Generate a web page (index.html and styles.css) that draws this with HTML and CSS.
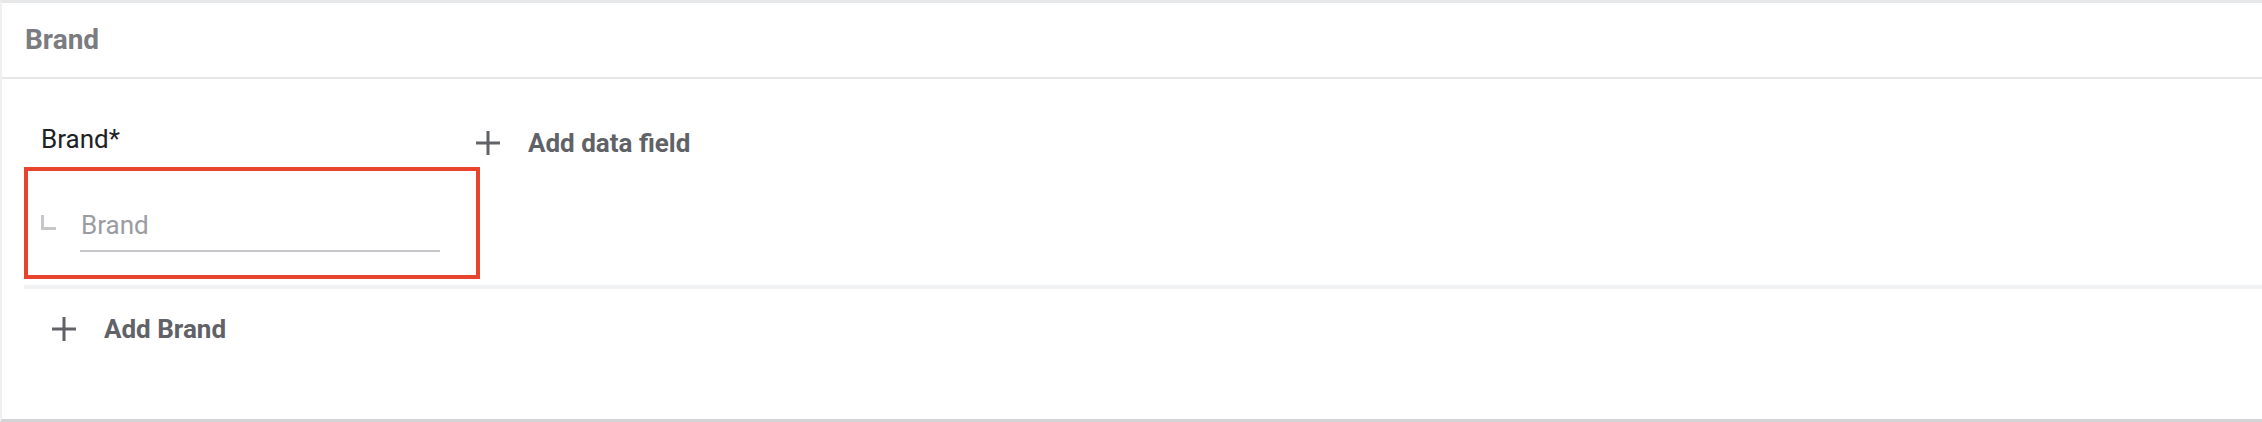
FILE: index.html
```html
<!DOCTYPE html>
<html lang="en">
<head>
    <meta charset="UTF-8">
    <meta name="viewport" content="width=device-width, initial-scale=1.0">
    <title>Brand</title>
    <link rel="stylesheet" href="styles.css">
</head>
<body>
    <div class="card">
        <div class="card-header">Brand</div>
        <div class="card-body">
            <div class="field-row">
                <div class="field-col">
                    <label class="field-label" for="brand">Brand*</label>
                    <div class="field-box">
                        <span class="corner"></span>
                        <input class="field-input" id="brand" type="text" placeholder="Brand">
                    </div>
                </div>
                <button class="add-btn add-field">
                    <svg width="24" height="24" viewBox="0 0 24 24"><path d="M12 0v24M0 12h24" stroke="currentColor" stroke-width="3" fill="none"/></svg>
                    Add data field
                </button>
            </div>
            <div class="divider"></div>
            <button class="add-btn add-brand">
                <svg width="24" height="24" viewBox="0 0 24 24"><path d="M12 0v24M0 12h24" stroke="currentColor" stroke-width="3" fill="none"/></svg>
                Add Brand
            </button>
        </div>
    </div>
</body>
</html>
```

FILE: styles.css
```css
*{
    margin: 0;
    padding: 0;
    box-sizing: border-box;
}
body{
    font-family: Roboto, "Liberation Sans", sans-serif;
    background-color: #fff;
}
.card {
    height: 422px;
    border-top: 3px solid #e6e7e9;
    border-left: 2px solid #f0f0f1;
    border-bottom: 3px solid #d3d3d5;
}
.card-header {
    height: 76px;
    display: flex;
    align-items: center;
    padding-left: 23px;
    font-size: 28px;
    line-height: 30px;
    font-weight: 700;
    color: #7a7c82;
    border-bottom: 2px solid #e6e6e8;
}
.card-body {
    padding-top: 45px;
}
.field-row {
    display: flex;
    padding-left: 22px;
}
.field-col {
    width: 452px;
}
.field-label {
    display: block;
    font-size: 26px;
    line-height: 30px;
    padding-left: 17px;
    margin-bottom: 13px;
    color: #202124;
}
.field-box {
    width: 456px;
    height: 112px;
    display: flex;
    align-items: flex-start;
    padding: 39px 0 0 13px;
    border: 4px solid #e8432d;
}
.corner {
    width: 15px;
    height: 15px;
    margin-top: 5px;
    border-left: 3px solid #c6c7cb;
    border-bottom: 3px solid #c6c7cb;
}
.field-input {
    width: 360px;
    height: 42px;
    margin-left: 24px;
    padding: 0 0 10px 1px;
    border: 0;
    border-bottom: 2px solid #c4c5c8;
    font-family: inherit;
    font-size: 26px;
    color: #202124;
    background: transparent;
    outline: none;
}
.field-input::placeholder {
    color: #9a9ca1;
}
.add-btn {
    display: flex;
    align-items: center;
    gap: 28px;
    border: 0;
    background: none;
    font-family: inherit;
    font-size: 26px;
    line-height: 30px;
    font-weight: 700;
    color: #606268;
    cursor: pointer;
}
.add-field {
    align-self: flex-start;
    margin-top: 4px;
}
.divider {
    height: 4px;
    margin: 6px 0 0 22px;
    background-color: #f1f2f3;
}
.add-brand {
    margin: 25px 0 0 50px;
}
```
